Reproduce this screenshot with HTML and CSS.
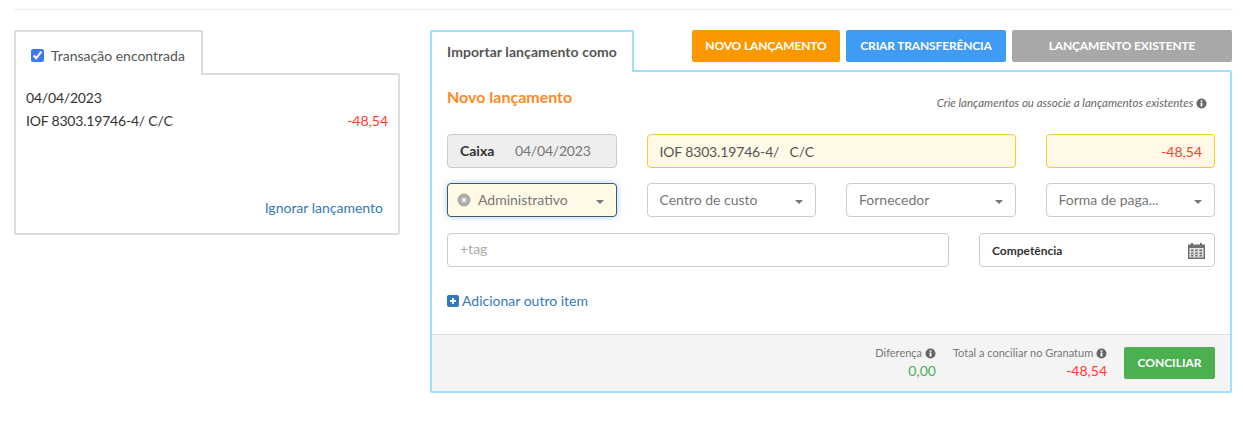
FILE: index.html
```html
<!DOCTYPE html>
<html lang="pt-BR">
<head>
    <meta charset="UTF-8">
    <title>Conciliação</title>
    <link rel="stylesheet" href="styles.css">
</head>
<body>
    <hr class="top-line">
    <div class="page">
        <div class="left-col">
            <div class="found-tab">
                <input type="checkbox" class="found-check" checked>
                <span>Transação encontrada</span>
            </div>
            <div class="found-box">
                <div class="found-date num">04/04/2023</div>
                <div class="found-row">
                    <span class="num">IOF 8303.19746-4/ C/C</span>
                    <span class="red">-48,54</span>
                </div>
                <a class="ignore-link">Ignorar lançamento</a>
            </div>
        </div>

        <div class="right-col">
            <div class="tab-row">
                <div class="import-tab">Importar lançamento como</div>
                <div class="actions">
                    <button class="btn btn-orange">NOVO LANÇAMENTO</button>
                    <button class="btn btn-blue">CRIAR TRANSFERÊNCIA</button>
                    <button class="btn btn-gray">LANÇAMENTO EXISTENTE</button>
                </div>
            </div>
            <div class="panel">
                <div class="panel-body">
                    <div class="panel-head">
                        <h2>Novo lançamento</h2>
                        <p class="hint">Crie lançamentos ou associe a lançamentos existentes
                            <svg class="info" viewBox="0 0 12 12"><circle cx="6" cy="6" r="5.5"/><rect class="info-mark" x="5" y="5" width="2" height="4.2"/><rect class="info-mark" x="5" y="2.6" width="2" height="1.5"/></svg>
                        </p>
                    </div>
                    <div class="fields">
                        <div class="field field-gray"><b>Caixa</b><span class="num">04/04/2023</span></div>
                        <div class="field field-yellow span-2"><span class="num-input">IOF 8303.19746-4/ &nbsp; C/C</span></div>
                        <div class="field field-yellow field-value">-48,54</div>

                        <div class="field select select-active">
                            <svg class="clear" viewBox="0 0 14 14"><circle cx="7" cy="7" r="6.5"/><path d="M5 5l4 4M9 5l-4 4"/></svg>
                            <span>Administrativo</span><i class="caret"></i>
                        </div>
                        <div class="field select"><span>Centro de custo</span><i class="caret"></i></div>
                        <div class="field select"><span>Fornecedor</span><i class="caret"></i></div>
                        <div class="field select"><span>Forma de paga...</span><i class="caret"></i></div>
                    </div>
                    <div class="tags-row">
                        <div class="field tag-field">+tag</div>
                        <div class="field date-field">
                            <b>Competência</b>
                            <svg class="calendar" viewBox="0 0 17 17">
                                <path d="M0 2.5h3V1h2v1.500h7V1h2v1.500h3V17H0z"/>
                                <path class="cal-cells" d="M1.500 6h14v9.500h-14z"/>
                                <path d="M3 7.500h2.500v1.700H3zM7.200 7.500h2.500v1.700H7.200zM11.500 7.500H14v1.700h-2.500zM3 10.500h2.500v1.700H3zM7.200 10.500h2.500v1.700H7.200zM11.500 10.500H14v1.700h-2.500zM3 13h2.500v1.500H3zM7.200 13h2.500v1.500H7.200zM11.500 13H14v1.500h-2.500z"/>
                            </svg>
                        </div>
                    </div>
                    <a class="add-link">
                        <svg class="plus" viewBox="0 0 12 12"><rect width="12" height="12" rx="2"/><path d="M6 3v6M3 6h6"/></svg>Adicionar outro item
                    </a>
                </div>
                <div class="panel-foot">
                    <div class="total">
                        <div class="total-label">Diferença <svg class="info" viewBox="0 0 12 12"><circle cx="6" cy="6" r="5.500"/><rect class="info-mark" x="5" y="5" width="2" height="4.200"/><rect class="info-mark" x="5" y="2.600" width="2" height="1.500"/></svg></div>
                        <div class="total-value green">0,00</div>
                    </div>
                    <div class="total">
                        <div class="total-label">Total a conciliar no Granatum <svg class="info" viewBox="0 0 12 12"><circle cx="6" cy="6" r="5.500"/><rect class="info-mark" x="5" y="5" width="2" height="4.200"/><rect class="info-mark" x="5" y="2.600" width="2" height="1.500"/></svg></div>
                        <div class="total-value red">-48,54</div>
                    </div>
                    <button class="btn btn-green">CONCILIAR</button>
                </div>
            </div>
        </div>
    </div>
</body>
</html>
```

FILE: styles.css
```css
* {
    box-sizing: border-box;
}

body {
    margin: 0;
    font-family: Lato, sans-serif;
    font-size: 14px;
    color: #333333;
    background-color: #ffffff;
}

.top-line {
    height: 1px;
    margin: 9px 10px 20px 14px;
    border: none;
    background-color: #eeeeee;
}

.page {
    display: flex;
    align-items: flex-start;
    padding: 0 11px 0 14px;
}

.red {
    color: #ff3b30;
}

.green {
    color: #4caf50;
}

.num {
    letter-spacing: -0.2px;
}

.num-input {
    letter-spacing: -0.15px;
}

/* left side */
.left-col {
    width: 386px;
    margin-right: 30px;
}

.found-tab {
    position: relative;
    display: flex;
    align-items: center;
    width: 189px;
    height: 45px;
    margin-bottom: -2px;
    padding: 3px 0 0 15px;
    border: 2px solid #dddddd;
    border-bottom: none;
    border-radius: 2px 2px 0 0;
    background-color: #ffffff;
    color: #555555;
    z-index: 1;
}

.found-check {
    width: 13px;
    height: 13px;
    margin: 0 7px 0 0;
    accent-color: #3d78f5;
}

.found-box {
    height: 162px;
    padding: 11px 10px 0 10px;
    border: 2px solid #dddddd;
    border-radius: 0 2px 2px 2px;
}

.found-date {
    height: 23px;
    line-height: 23px;
}

.found-row {
    display: flex;
    justify-content: space-between;
    line-height: 23px;
}

.ignore-link {
    display: block;
    margin: 67px 5px 0 0;
    color: #337ab7;
    text-align: right;
}

/* right side */
.right-col {
    width: 802px;
}

.tab-row {
    display: flex;
    justify-content: space-between;
    align-items: flex-start;
}

.import-tab {
    position: relative;
    width: 204px;
    height: 42px;
    margin-bottom: -2px;
    padding-left: 15px;
    border: 2px solid #a0e0ff;
    border-bottom: none;
    border-radius: 2px 2px 0 0;
    background-color: #ffffff;
    color: #555555;
    font-weight: bold;
    letter-spacing: 0.08px;
    line-height: 40px;
    z-index: 1;
}

.actions {
    display: flex;
    gap: 6px;
}

.btn {
    height: 32px;
    padding: 0 0 2px 0;
    border: none;
    border-radius: 2px;
    color: #ffffff;
    font-family: Lato, sans-serif;
    font-size: 12px;
    font-weight: bold;
    letter-spacing: -0.15px;
}

.btn-orange {
    width: 148px;
    background-color: #fb9800;
}

.btn-blue {
    width: 160px;
    background-color: #3f9bf4;
}

.btn-gray {
    width: 220px;
    background-color: #a8a8a8;
}

.btn-green {
    width: 91px;
    margin-left: 17px;
    background-color: #4caf50;
    letter-spacing: 0;
}

.panel {
    border: 2px solid #a0e0ff;
    border-radius: 2px;
}

.panel-body {
    height: 262px;
    padding: 15px 15px 0 15px;
}

.panel-head {
    display: flex;
    justify-content: space-between;
    align-items: flex-start;
    height: 47px;
}

.panel-head h2 {
    margin: 0;
    color: #ff8a25;
    font-size: 16px;
    line-height: 20px;
}

.hint {
    margin: 7px 8px 0 0;
    color: #666666;
    font-size: 11.5px;
    font-style: italic;
    line-height: 18px;
}

.info {
    width: 11px;
    height: 11px;
    fill: #666666;
    vertical-align: -1.5px;
}

.info-mark {
    fill: #ffffff;
}

.fields {
    display: grid;
    grid-template-columns: repeat(4, 1fr);
    gap: 15px 30px;
}

.span-2 {
    grid-column: span 2;
}

.field {
    display: flex;
    align-items: center;
    height: 34px;
    padding: 0 12px;
    border: 1px solid #cccccc;
    border-radius: 4px;
    color: #666666;
    background-color: #ffffff;
}

.field-gray {
    padding-bottom: 2px;
    background-color: #eeeeee;
}

.field-gray b {
    width: 55px;
    color: #333333;
    font-size: 14px;
}

.field-gray span {
    color: #777777;
}

.field-yellow {
    border-color: #fccb2c;
    background-color: #fff9e6;
    color: #555555;
}

.field-value {
    justify-content: flex-end;
    color: #ff3b30;
}

.select {
    padding-bottom: 2px;
}

.select span {
    flex: 1;
    color: #777777;
}

.select-active {
    padding-left: 9px;
    border-color: #445566;
    background-color: #fff9e6;
    box-shadow: 0 0 6px rgba(102, 175, 233, 0.6);
}

.clear {
    width: 14px;
    height: 14px;
    margin: 2px 7px 0 0;
    fill: #aaaaaa;
    stroke: none;
}

.clear path {
    fill: none;
    stroke: #ffffff;
    stroke-width: 1.300;
}

.caret {
    width: 0;
    height: 0;
    margin: 5px 0 0 0;
    border-top: 4px solid #777777;
    border-left: 4px solid transparent;
    border-right: 4px solid transparent;
}

.tags-row {
    display: flex;
    gap: 30px;
    margin-top: 16px;
}

.tag-field {
    flex: 1;
    padding-bottom: 3px;
    color: #aaaaaa;
}

.date-field {
    justify-content: space-between;
    width: 236px;
    padding-right: 8px;
}

.date-field b {
    color: #333333;
    font-size: 12px;
}

.calendar {
    width: 17px;
    height: 17px;
    margin-right: 1px;
    fill: #707070;
}

.calendar .cal-cells {
    fill: #e2e2e2;
}

.add-link {
    display: flex;
    align-items: center;
    margin-top: 25px;
    color: #337ab7;
    line-height: 18px;
}

.plus {
    width: 12px;
    height: 12px;
    margin-right: 3px;
    fill: #337ab7;
}

.plus path {
    fill: none;
    stroke: #ffffff;
    stroke-width: 1.800;
}

.panel-foot {
    display: flex;
    justify-content: flex-end;
    align-items: center;
    height: 57px;
    padding: 0 15px;
    border-top: 1px solid #dddddd;
    background-color: #f4f4f4;
}

.total {
    margin-left: 17px;
    text-align: right;
}

.total-label {
    color: #777777;
    font-size: 11px;
    line-height: 16px;
}

.total-value {
    font-size: 14px;
    line-height: 20px;
}
```
